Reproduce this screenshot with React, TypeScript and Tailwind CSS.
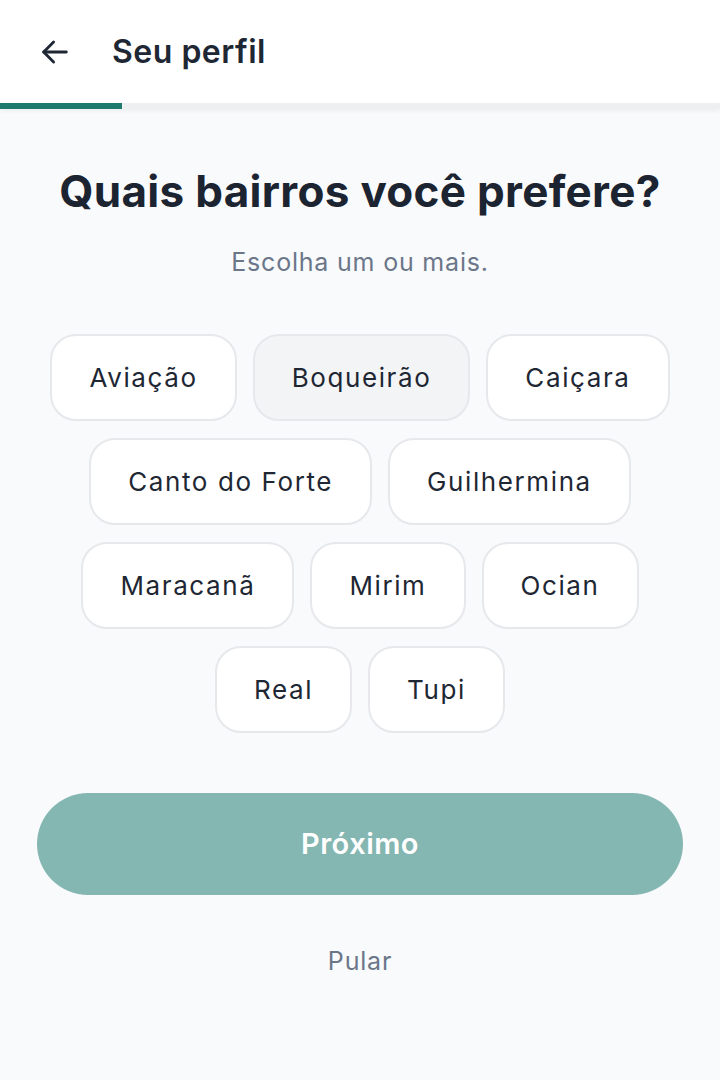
import { useState } from 'react';

const bairros = [
  'Aviação',
  'Boqueirão',
  'Caiçara',
  'Canto do Forte',
  'Guilhermina',
  'Maracanã',
  'Mirim',
  'Ocian',
  'Real',
  'Tupi',
];

export default function App() {
  const [selected, setSelected] = useState<string[]>([]);
  const hovered = 'Boqueirão';

  const toggle = (name: string) =>
    setSelected((s) => (s.includes(name) ? s.filter((n) => n !== name) : [...s, name]));

  return (
    <main
      className="min-h-[1080px] w-[720px] bg-[#f8fafc] text-[#1b2430]"
      style={{ fontFamily: 'Inter, "Noto Sans", sans-serif' }}
    >
      {/* Header */}
      <header className="bg-white shadow-[0_2px_4px_rgba(0,0,0,0.05)]">
        <div className="flex h-[103px] items-center px-[38px]">
          <button className="mr-[40px] flex h-[34px] w-[34px] items-center justify-center text-[#1e2733]">
            <svg width="34" height="34" viewBox="0 0 24 24" fill="none" stroke="currentColor" strokeWidth={2} strokeLinecap="round" strokeLinejoin="round">
              <path d="M20 12H4" />
              <path d="M11 5l-7 7 7 7" />
            </svg>
          </button>
          <h1 className="text-[32px] font-semibold tracking-[0.5px] text-[#1e2733]">Seu perfil</h1>
        </div>
        <div className="h-[6px] w-full bg-[#edeff1]">
          <div className="h-full w-[122px] bg-[#1f7a6e]" />
        </div>
      </header>

      {/* Content */}
      <section className="px-[36px] pt-[56px]">
        <h2 className="text-center text-[44px] font-bold leading-[52px] tracking-[0.3px] text-[#1b2430]">
          Quais bairros você prefere?
        </h2>
        <p className="mt-[27px] text-center text-[25px] tracking-[0.8px] text-[#6b7689]">
          Escolha um ou mais.
        </p>

        <div className="mt-[52px] flex flex-wrap justify-center gap-[17px_16px]">
          {bairros.map((b) => {
            const active = selected.includes(b);
            return (
              <button
                key={b}
                onClick={() => toggle(b)}
                className={`flex h-[87px] items-center rounded-[26px] border-2 px-[37px] text-[26px] font-normal tracking-[1.6px] text-[#1e2733] ${
                  active
                    ? 'border-[#1f7a6e] bg-[#e6f2f0]'
                    : b === hovered
                    ? 'border-[#e6e8eb] bg-[#f2f4f6]'
                    : 'border-[#e6e8eb] bg-white'
                }`}
              >
                {b}
              </button>
            );
          })}
        </div>

        <button
          className={`mx-auto mt-[60px] flex h-[102px] w-[646px] items-center justify-center rounded-full text-[29px] font-semibold tracking-[0.5px] text-white ${
            selected.length ? 'bg-[#1f7a6e]' : 'bg-[#84b6b2]'
          }`}
        >
          Próximo
        </button>

        <button className="mx-auto mt-[48px] block text-[25px] tracking-[0.8px] text-[#6b7689]">Pular</button>
      </section>
    </main>
  );
}
